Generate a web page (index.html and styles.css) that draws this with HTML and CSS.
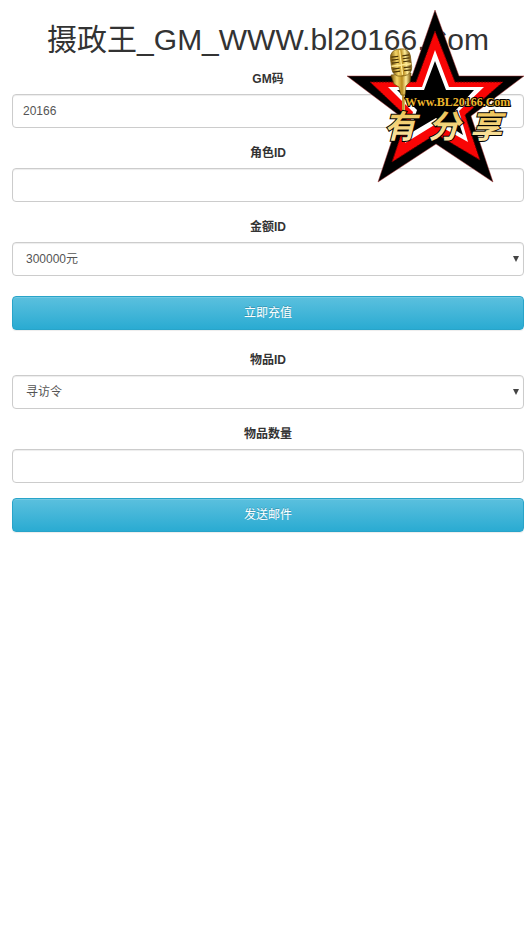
FILE: index.html
```html
<!DOCTYPE html>
<html lang="zh-CN">
<head>
<meta charset="utf-8">
<meta name="viewport" content="width=device-width, initial-scale=1">
<title>摄政王_GM</title>
<link rel="stylesheet" href="styles.css">
</head>
<body>
<main class="container">
  <h1 class="title">摄政王_GM_WWW.bl20166.Com</h1>
  <form class="form">
    <div class="group">
      <label for="gm">GM码</label>
      <input class="control" id="gm" type="text" value="20166">
    </div>
    <div class="group">
      <label for="role">角色ID</label>
      <input class="control" id="role" type="text">
    </div>
    <div class="group">
      <label for="amount">金额ID</label>
      <div class="select-wrap">
        <select class="control" id="amount"><option>300000元</option></select>
      </div>
    </div>
    <button class="btn btn-charge" type="button">立即充值</button>
    <div class="group">
      <label for="item">物品ID</label>
      <div class="select-wrap">
        <select class="control" id="item"><option>寻访令</option></select>
      </div>
    </div>
    <div class="group">
      <label for="count">物品数量</label>
      <input class="control" id="count" type="text">
    </div>
    <button class="btn" type="button">发送邮件</button>
  </form>
  <svg class="badge" viewBox="345 8 182 178" role="img" aria-label="有分享 Www.BL20166.Com">
    <defs>
      <linearGradient id="gold" x1="0" y1="0" x2="0" y2="1">
        <stop offset="0" stop-color="#e9b83e"/>
        <stop offset=".45" stop-color="#f2cf72"/>
        <stop offset="1" stop-color="#fff0bd"/>
      </linearGradient>
      <linearGradient id="metal" x1="0" y1="0" x2="1" y2="0">
        <stop offset="0" stop-color="#765006"/>
        <stop offset=".3" stop-color="#f4d568"/>
        <stop offset=".55" stop-color="#b88a1c"/>
        <stop offset=".75" stop-color="#ffed9a"/>
        <stop offset="1" stop-color="#765006"/>
      </linearGradient>
    </defs>
    <path d="M435 10L459 76H524L471 116L493 182L436 144L378 182L400 116L347 76H412Z" fill="#000" stroke="#a33" stroke-width=".5"/>
    <path d="M435 31L455 82H503L465 115L480 160L436 134L392 162L407 117L370 82H416Z" fill="#f80505" stroke="#600" stroke-width="1" stroke-dasharray="2 1"/>
    <path d="M435 50L449 87H484L459 111L468 142L436 124L405 143L413 112L388 87H422Z" fill="#fff"/>
    <path d="M435 61L446 90H474L455 111L463 135L436 118L409 134L417 110L397 90H424Z" fill="#000"/>
    <g>
      <path d="M402 91h3v24h-3z" fill="url(#metal)"/>
      <path d="M391 75L394 84L399 87L401 95H405L406 86L410 82L411 73Z" fill="url(#metal)" stroke="#70500a" stroke-width=".7"/>
      <g transform="rotate(-7 401 62)">
        <rect x="391" y="49" width="20" height="27" rx="8" fill="url(#metal)" stroke="#806015" stroke-width=".8"/>
        <path d="M392 56h7M392 59h7M392 62h7M392 68h7M392 71h7M403 56h7M403 59h7M403 62h7M403 68h7M403 71h7" stroke="#4c3507" stroke-width="1.2"/>
        <path d="M391 65h20M401 50v25" stroke="#ffe991" stroke-width="1.4"/>
      </g>
    </g>
    <g class="badge-name">
      <text x="384" y="138">有</text>
      <text x="428" y="138">分</text>
      <text x="470" y="138">享</text>
    </g>
    <text class="badge-site" x="405" y="106">Www.BL20166.Com</text>
  </svg>
</main>
</body>
</html>
```
FILE: styles.css
```css
* {
  box-sizing: border-box;
}

body {
  margin: 0;
  background: #fff;
  color: #333;
  font-family: "Liberation Sans", "Noto Sans CJK SC", sans-serif;
  font-size: 12px;
  line-height: 20px;
}

.container {
  position: relative;
  padding: 20px 7px 20px 12px;
}

.title {
  margin: 0 0 9px;
  font-size: 30px;
  font-weight: 400;
  line-height: 40px;
  text-align: center;
}

.group {
  margin-bottom: 15px;
}

label {
  display: block;
  margin-bottom: 5px;
  font-weight: 700;
  text-align: center;
}

.control {
  display: block;
  width: 100%;
  height: 34px;
  padding: 6px 10px;
  border: 1px solid #ccc;
  border-radius: 4px;
  background: #fff;
  box-shadow: inset 0 1px 1px rgba(0, 0, 0, .075);
  color: #555;
  font: inherit;
}

select.control {
  padding-left: 13px;
  appearance: none;
}

.select-wrap {
  position: relative;
}

.select-wrap::after {
  content: "";
  position: absolute;
  top: 14px;
  right: 5px;
  border: solid transparent;
  border-width: 6px 3px 0;
  border-top-color: #444;
  pointer-events: none;
}

.btn {
  display: block;
  width: 100%;
  height: 34px;
  padding: 6px 12px;
  border: 1px solid #28a4c9;
  border-radius: 4px;
  background: linear-gradient(#5bc0de, #2aabd2);
  box-shadow: inset 0 1px 0 rgba(255, 255, 255, .15), 0 1px 1px rgba(0, 0, 0, .075);
  color: #fff;
  font: inherit;
  text-shadow: 0 -1px 0 rgba(0, 0, 0, .2);
}

.btn-charge {
  margin: 20px 0;
}

.badge {
  position: absolute;
  top: 8px;
  right: 4px;
  width: 182px;
  height: 178px;
  pointer-events: none;
}

.badge-name {
  fill: url(#gold);
  stroke: #000;
  stroke-width: 2px;
  paint-order: stroke;
  font-family: "Noto Sans CJK SC", sans-serif;
  font-size: 32px;
  font-style: italic;
  font-weight: 700;
}

.badge-site {
  fill: #edb52d;
  stroke: #000;
  stroke-width: 2px;
  paint-order: stroke;
  font-family: "Liberation Serif", serif;
  font-size: 12px;
  font-weight: 700;
}
```
